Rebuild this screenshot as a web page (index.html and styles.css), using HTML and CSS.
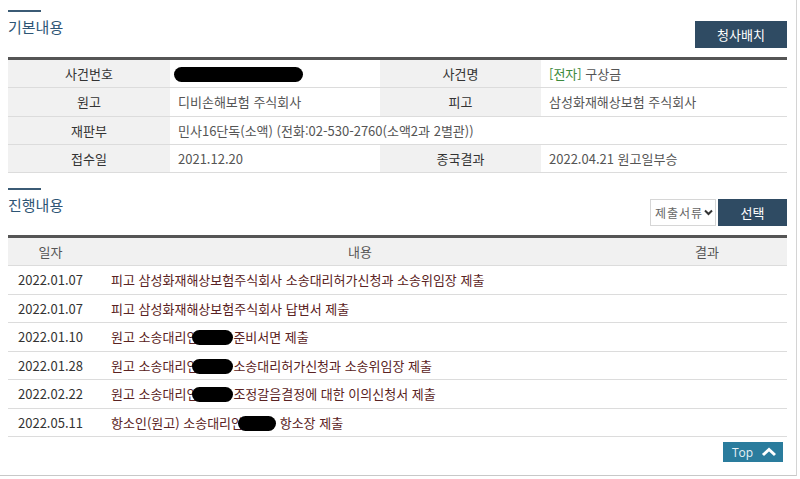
FILE: index.html
```html
<!DOCTYPE html>
<html lang="ko">
<head>
    <meta charset="UTF-8">
    <title>사건 일반내용</title>
    <link rel="stylesheet" href="styles.css">
</head>
<body>
    <div class="page">
        <div class="section-head">
            <h2 class="title">기본내용</h2>
            <div class="tools">
                <button class="btn btn-wide">청사배치</button>
            </div>
        </div>

        <table class="info-table">
            <colgroup>
                <col style="width:162px">
                <col style="width:210px">
                <col style="width:161px">
                <col>
            </colgroup>
            <tr>
                <th>사건번호</th>
                <td><span class="mask mask-long"></span></td>
                <th>사건명</th>
                <td><span class="tag">[전자]</span> 구상금</td>
            </tr>
            <tr>
                <th>원고</th>
                <td>디비손해보험 주식회사</td>
                <th>피고</th>
                <td>삼성화재해상보험 주식회사</td>
            </tr>
            <tr>
                <th>재판부</th>
                <td colspan="3">민사16단독(소액) (전화:02-530-2760(소액2과 2별관))</td>
            </tr>
            <tr>
                <th>접수일</th>
                <td>2021.12.20</td>
                <th>종국결과</th>
                <td>2022.04.21 원고일부승</td>
            </tr>
        </table>

        <div class="section-head second">
            <h2 class="title">진행내용</h2>
            <div class="tools">
                <div class="fake-select">
                    제출서류
                    <svg width="9" height="7" viewBox="0 0 9 7"><path d="M1 1.5 L4.5 5 L8 1.5" fill="none" stroke="#333" stroke-width="2"/></svg>
                </div>
                <button class="btn">선택</button>
            </div>
        </div>

        <table class="list-table">
            <colgroup>
                <col style="width:85px">
                <col style="width:534px">
                <col>
            </colgroup>
            <tr>
                <th>일자</th>
                <th>내용</th>
                <th>결과</th>
            </tr>
            <tr>
                <td class="date">2022.01.07</td>
                <td class="text">피고 삼성화재해상보험주식회사 소송대리허가신청과 소송위임장 제출</td>
                <td></td>
            </tr>
            <tr>
                <td class="date">2022.01.07</td>
                <td class="text">피고 삼성화재해상보험주식회사 답변서 제출</td>
                <td></td>
            </tr>
            <tr>
                <td class="date">2022.01.10</td>
                <td class="text">원고 소송대리인<span class="mask"></span>준비서면 제출</td>
                <td></td>
            </tr>
            <tr>
                <td class="date">2022.01.28</td>
                <td class="text">원고 소송대리인<span class="mask"></span>소송대리허가신청과 소송위임장 제출</td>
                <td></td>
            </tr>
            <tr>
                <td class="date">2022.02.22</td>
                <td class="text">원고 소송대리인<span class="mask"></span>조정갈음결정에 대한 이의신청서 제출</td>
                <td></td>
            </tr>
            <tr>
                <td class="date">2022.05.11</td>
                <td class="text">항소인(원고) 소송대리인<span class="mask mask-short"></span> 항소장 제출</td>
                <td></td>
            </tr>
        </table>

        <div class="bottom">
            <a class="top-btn" href="#">Top
                <svg width="16" height="10" viewBox="0 0 16 10"><path d="M2 8 L8 2.5 L14 8" fill="none" stroke="#fff" stroke-width="3"/></svg>
            </a>
        </div>
    </div>
</body>
</html>
```

FILE: styles.css
```css
body {
    margin: 0;
    font-family: "Noto Sans CJK KR", "Noto Sans", sans-serif;
    font-size: 13px;
    color: #555;
    background: #fff;
}

.page {
    width: 779px;
    height: 465px;
    padding: 10px 9px 0 8px;
    border-right: 1px solid #d4d4d4;
    border-bottom: 1px solid #c8c8c8;
}

.section-head {
    display: flex;
    justify-content: space-between;
    align-items: flex-start;
}

.section-head.second {
    margin-top: 15px;
}

.title {
    margin: 0;
    font-size: 15px;
    font-weight: normal;
    line-height: 20px;
    color: #2d5575;
}

.title::before {
    content: "";
    display: block;
    width: 33px;
    height: 2px;
    background: #3b5b75;
    margin-bottom: 5px;
}

.tools {
    display: flex;
    gap: 2px;
    margin-top: 11px;
}

.btn {
    height: 27px;
    width: 69px;
    border: none;
    background: #2f4b63;
    color: #fff;
    font-family: inherit;
    font-size: 13px;
    padding: 0;
}

.btn-wide {
    width: 92px;
}

.fake-select {
    box-sizing: border-box;
    width: 66px;
    height: 27px;
    border: 1px solid #d6d6d6;
    display: flex;
    align-items: center;
    gap: 1px;
    padding-left: 4px;
    color: #666;
    font-size: 12px;
    letter-spacing: 1px;
}

table {
    width: 779px;
    border-collapse: collapse;
    table-layout: fixed;
    border-top: 3px solid #555;
}

.info-table {
    margin-top: 9px;
}

.info-table th,
.info-table td {
    height: 27.3px;
    padding: 0 8px;
    border-bottom: 1px solid #dcdcdc;
    text-align: left;
    font-weight: normal;
}

.info-table th {
    background: #f1f1f1;
    text-align: center;
    color: #333;
}

.tag {
    color: #3c8a3c;
}

.mask {
    display: inline-block;
    width: 41px;
    height: 15px;
    margin-left: -6px;
    border-radius: 8px;
    background: #000;
    vertical-align: -3px;
}

.mask-long {
    width: 129px;
    margin-left: -4px;
}

.mask-short {
    width: 38px;
    margin-left: -5px;
}

.list-table {
    margin-top: 9px;
}

.list-table th,
.list-table td {
    height: 27.5px;
    padding: 0;
    border-bottom: 1px solid #dcdcdc;
    font-weight: normal;
}

.list-table th {
    background: #f1f1f1;
    color: #555;
    text-align: center;
    height: 27px;
}

.list-table .date {
    text-align: center;
    color: #333;
}

.list-table .text {
    padding-left: 18px;
    color: #5a2222;
}

.bottom {
    display: flex;
    justify-content: flex-end;
    padding: 5px 4px 0 0;
}

.top-btn {
    display: flex;
    align-items: center;
    justify-content: space-between;
    box-sizing: border-box;
    width: 60px;
    height: 20px;
    padding: 0 6px 0 9px;
    background: #2a7c9d;
    color: #e8f2f6;
    font-family: "Open Sans", sans-serif;
    font-size: 12px;
    text-decoration: none;
}
```
